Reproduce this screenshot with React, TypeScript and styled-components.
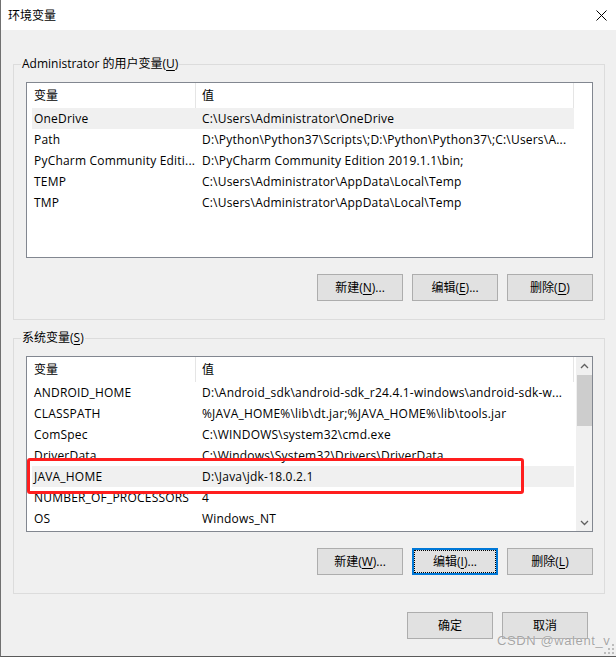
import React from "react";
import styled, { createGlobalStyle } from "styled-components";

const GlobalStyle = createGlobalStyle`
  html, body { margin: 0; padding: 0; background: #f0f0f0; }
  body {
    font-family: "Open Sans", "Noto Sans CJK SC", sans-serif;
    font-size: 12px;
    color: #000;
  }
  * { box-sizing: border-box; }
`;

const Window = styled.div`
  position: relative;
  width: 616px;
  height: 657px;
  border-left: 1px solid #707070;
  border-bottom: 1px solid #5a5a5a;
  background: #f0f0f0;
  display: flex;
  flex-direction: column;
  overflow: hidden;
`;

const TitleBar = styled.div`
  height: 30px;
  flex: none;
  background: #fff;
  display: flex;
  align-items: center;
  padding-left: 7px;
  padding-right: 9px;
`;

const Title = styled.span`
  font-family: "Noto Sans CJK SC", sans-serif;
  font-size: 12px;
  line-height: 16px;
`;

const CloseIcon = styled.svg`
  margin-left: auto;
  display: block;
`;

const Body = styled.div`
  flex: 1;
  display: flex;
  flex-direction: column;
  padding: 34px 0 0 12px;
`;

const GroupBox = styled.div<{ $gap?: number }>`
  position: relative;
  width: 592px;
  margin-top: ${(p) => p.$gap ?? 0}px;
  border: 1px solid #dcdcdc;
  padding: 17px 11px 18px 12px;
  display: flex;
  flex-direction: column;
`;

const GroupLabel = styled.span`
  position: absolute;
  top: -9px;
  left: 7px;
  padding: 0 1px;
  background: #f0f0f0;
  line-height: 16px;
  white-space: nowrap;
`;

const Key = styled.span`
  text-decoration: underline;
  text-underline-offset: 2px;
`;

const ListView = styled.div`
  width: 567px;
  height: 176px;
  border: 1px solid #828790;
  background: #fff;
  display: flex;
  overflow: hidden;
`;

const Columns = styled.div`
  width: 548px;
  flex: none;
  display: flex;
  flex-direction: column;
`;

const HeaderRow = styled.div`
  height: 25px;
  flex: none;
  display: flex;
`;

const HeaderCell = styled.div<{ $w: number; $pad: number }>`
  width: ${(p) => p.$w}px;
  flex: none;
  padding-left: ${(p) => p.$pad}px;
  border-right: 1px solid #e5e5e5;
  display: flex;
  align-items: center;
  line-height: 16px;
`;

const Row = styled.div<{ $selected?: boolean }>`
  height: 21px;
  flex: none;
  margin-left: 5px;
  width: 542px;
  display: flex;
  align-items: center;
  background: ${(p) => (p.$selected ? "#f0f0f0" : "transparent")};
`;

const Cell = styled.div<{ $w: number; $pad: number }>`
  width: ${(p) => p.$w}px;
  flex: none;
  padding-left: ${(p) => p.$pad}px;
  white-space: nowrap;
  overflow: hidden;
  line-height: 16px;
  letter-spacing: 0.2px;
`;

const ScrollBar = styled.div`
  width: 17px;
  flex: none;
  margin-left: 1px;
  background: #f0f0f0;
  display: flex;
  flex-direction: column;
`;

const ScrollArrow = styled.div`
  height: 17px;
  flex: none;
  display: flex;
  align-items: center;
  justify-content: center;
`;

const ScrollTrack = styled.div`
  flex: 1;
  display: flex;
  flex-direction: column;
  padding: 1px 1px 0 1px;
`;

const Thumb = styled.div`
  height: 51px;
  background: #cdcdcd;
`;

const ButtonRow = styled.div<{ $top: number; $right: number }>`
  display: flex;
  justify-content: flex-end;
  gap: 9px;
  margin-top: ${(p) => p.$top}px;
  padding-right: ${(p) => p.$right}px;
`;

const Button = styled.div<{ $focused?: boolean }>`
  width: 86px;
  height: 27px;
  background: #e1e1e1;
  border: ${(p) => (p.$focused ? "2px solid #0078d7" : "1px solid #adadad")};
  outline: ${(p) => (p.$focused ? "1px dotted #000" : "none")};
  outline-offset: -3px;
  display: flex;
  align-items: center;
  justify-content: center;
  line-height: 16px;
  white-space: nowrap;
`;

const Annotation = styled.div`
  position: absolute;
  left: 26px;
  top: 458px;
  width: 497px;
  height: 36px;
  border: 3px solid #ff1e1e;
  border-radius: 3px;
  pointer-events: none;
`;

const Watermark = styled.div`
  position: absolute;
  left: 496px;
  top: 633px;
  font-family: "Liberation Sans", Arial, sans-serif;
  font-size: 13px;
  line-height: 15px;
  letter-spacing: 0.6px;
  color: rgba(150, 150, 150, 0.85);
  text-shadow: 0 0 1px rgba(255, 255, 255, 0.8);
  white-space: nowrap;
  pointer-events: none;
`;

const Grip = styled.svg`
  position: absolute;
  right: 1px;
  bottom: 1px;
`;

type Var = { name: string; value: string; selected?: boolean };

const userVars: Var[] = [
  { name: "OneDrive", value: String.raw`C:\Users\Administrator\OneDrive`, selected: true },
  { name: "Path", value: String.raw`D:\Python\Python37\Scripts\;D:\Python\Python37\;C:\Users\A...` },
  { name: "PyCharm Community Editi...", value: String.raw`D:\PyCharm Community Edition 2019.1.1\bin;` },
  { name: "TEMP", value: String.raw`C:\Users\Administrator\AppData\Local\Temp` },
  { name: "TMP", value: String.raw`C:\Users\Administrator\AppData\Local\Temp` },
];

const sysVars: Var[] = [
  { name: "ANDROID_HOME", value: String.raw`D:\Android_sdk\android-sdk_r24.4.1-windows\android-sdk-w...` },
  { name: "CLASSPATH", value: String.raw`%JAVA_HOME%\lib\dt.jar;%JAVA_HOME%\lib\tools.jar` },
  { name: "ComSpec", value: String.raw`C:\WINDOWS\system32\cmd.exe` },
  { name: "DriverData", value: String.raw`C:\Windows\System32\Drivers\DriverData` },
  { name: "JAVA_HOME", value: String.raw`D:\Java\jdk-18.0.2.1`, selected: true },
  { name: "NUMBER_OF_PROCESSORS", value: "4" },
  { name: "OS", value: "Windows_NT" },
];

const Chevron = ({ up }: { up?: boolean }) => (
  <svg width="9" height="6" viewBox="0 0 9 6">
    <path
      d={up ? "M1 5 L4.5 1.5 L8 5" : "M1 1 L4.5 4.5 L8 1"}
      fill="none"
      stroke="#606060"
      strokeWidth="1.3"
    />
  </svg>
);

const VarList = ({ vars, scroll }: { vars: Var[]; scroll?: boolean }) => (
  <ListView>
    <Columns>
      <HeaderRow>
        <HeaderCell $w={169} $pad={7}>变量</HeaderCell>
        <HeaderCell $w={378} $pad={6}>值</HeaderCell>
      </HeaderRow>
      {vars.map((v) => (
        <Row key={v.name} $selected={v.selected}>
          <Cell $w={164} $pad={2}>{v.name}</Cell>
          <Cell $w={378} $pad={6}>{v.value}</Cell>
        </Row>
      ))}
    </Columns>
    {scroll && (
      <ScrollBar>
        <ScrollArrow>
          <Chevron up />
        </ScrollArrow>
        <ScrollTrack>
          <Thumb />
        </ScrollTrack>
        <ScrollArrow>
          <Chevron />
        </ScrollArrow>
      </ScrollBar>
    )}
  </ListView>
);

export default function App() {
  return (
    <>
      <GlobalStyle />
      <Window>
        <TitleBar>
          <Title>环境变量</Title>
          <CloseIcon width="11" height="11" viewBox="0 0 11 11">
            <path d="M0.5 0.5 L10.5 10.5 M10.5 0.5 L0.5 10.5" stroke="#000" strokeWidth="1" />
          </CloseIcon>
        </TitleBar>
        <Body>
          <GroupBox>
            <GroupLabel>
              Administrator 的用户变量(<Key>U</Key>)
            </GroupLabel>
            <VarList vars={userVars} />
            <ButtonRow $top={16} $right={0}>
              <Button>新建(<Key>N</Key>)...</Button>
              <Button>编辑(<Key>E</Key>)...</Button>
              <Button>删除(<Key>D</Key>)</Button>
            </ButtonRow>
          </GroupBox>
          <GroupBox $gap={18}>
            <GroupLabel>
              系统变量(<Key>S</Key>)
            </GroupLabel>
            <VarList vars={sysVars} scroll />
            <ButtonRow $top={16} $right={0}>
              <Button>新建(<Key>W</Key>)...</Button>
              <Button $focused>编辑(<Key>I</Key>)...</Button>
              <Button>删除(<Key>L</Key>)</Button>
            </ButtonRow>
          </GroupBox>
          <ButtonRow $top={18} $right={28}>
            <Button>确定</Button>
            <Button>取消</Button>
          </ButtonRow>
        </Body>
        <Annotation />
        <Watermark>CSDN @walent_v</Watermark>
        <Grip width="12" height="12" viewBox="0 0 12 12">
          {[
            [9, 1], [9, 5], [5, 5], [9, 9], [5, 9], [1, 9],
          ].map(([x, y]) => (
            <rect key={`${x}-${y}`} x={x} y={y} width="2" height="2" fill="#bcbcbc" />
          ))}
        </Grip>
      </Window>
    </>
  );
}
